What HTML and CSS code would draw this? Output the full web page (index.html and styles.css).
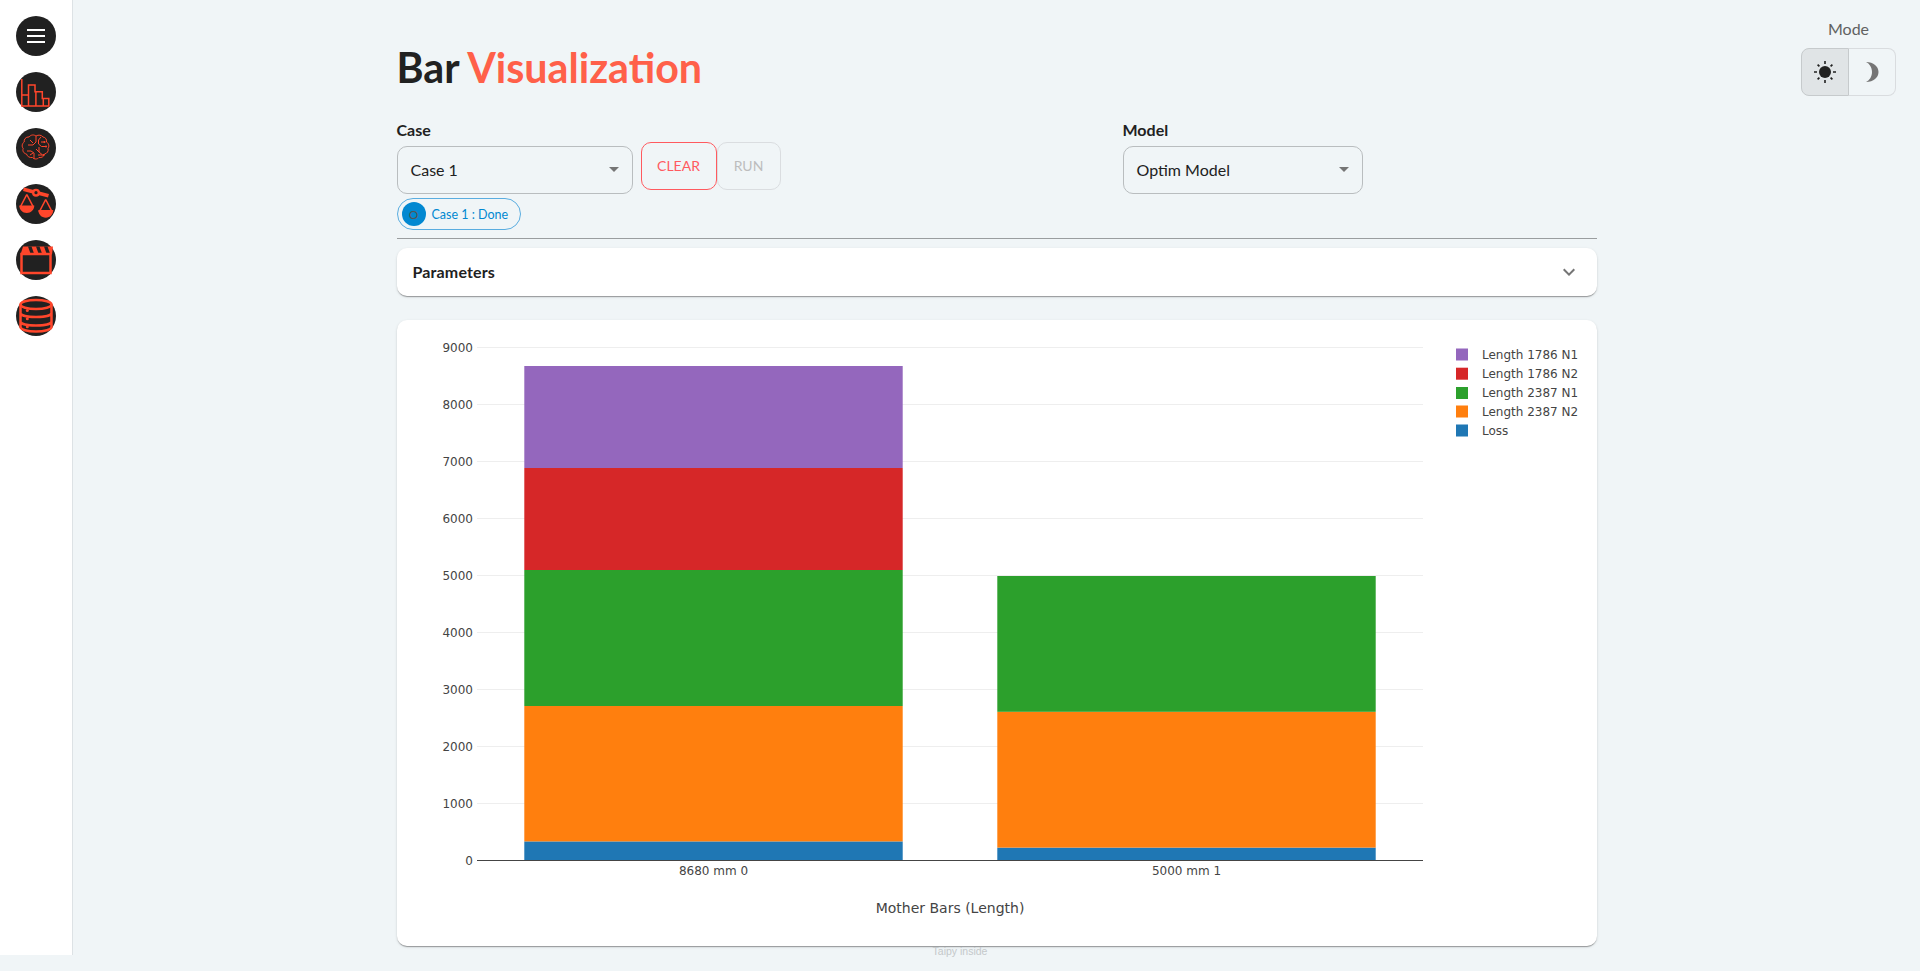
FILE: index.html
```html
<!DOCTYPE html>
<html lang="en">
<head>
    <meta charset="UTF-8">
    <title>Bar Visualization</title>
    <link rel="stylesheet" href="styles.css">
</head>
<body>
    <div class="shell">
        <nav class="sidebar">
            <button class="nav-btn">
                <svg viewBox="0 0 40 40"><circle cx="20" cy="20" r="20" fill="#212121"/><path d="M11 13h18v2H11zM11 19h18v2H11zM11 25h18v2H11z" fill="#fff"/></svg>
            </button>
            <button class="nav-btn">
                <svg viewBox="0 0 40 40"><circle cx="20" cy="20" r="20" fill="#212121"/><path d="M5.800 7v27h27V26.500h-6.500V19.800h-7.300V13H12.500v10H5.800M12.500 23v11M19.900 19.800V34M27.300 26.500V34" fill="none" stroke="#ff462b" stroke-width="1.500"/></svg>
            </button>
            <button class="nav-btn">
                <svg viewBox="0 0 40 40"><circle cx="20" cy="20" r="20" fill="#212121"/><path d="M13 9c2-2.500 5-2.500 7-1 2.500-1.500 5.500-1 7 1 2.500.3 4 2.500 3.500 5 2.500 1.500 3 4.500 1.500 6.500.8 2.500-.8 5-3.500 5.500-.5 2.500-3 4-5.500 3.500-1.500 2-5 2-6.500 0-2.500.5-5.500-1-6-3.500-2.800-.5-4.300-3-3.300-5.500-1.700-2-1.200-5 1-6.500-.4-2.500 1.300-4.700 3.800-5zM20 8v6l-3 3h-5M14 12l3 3M25 9l-2.500 3v4l3 2.500h4M25 14h3M11 23h4l3 2v6M23 19v5l3 2.500M20 21l3 3M22 27h5M14 27l3-2" fill="none" stroke="#ff462b" stroke-width="1"/><circle cx="28.500" cy="14" r="1" fill="#ff462b"/><circle cx="30" cy="18.500" r="1" fill="#ff462b"/><circle cx="27.500" cy="27" r="1" fill="#ff462b"/></svg>
            </button>
            <button class="nav-btn">
                <svg viewBox="0 0 40 40"><circle cx="20" cy="20" r="20" fill="#212121"/><path d="M8 3.500l25 6.500-1 3.500L7 7z" fill="#ff462b"/><circle cx="20" cy="8.700" r="4" fill="#ff462b"/><circle cx="20" cy="8.700" r="1.600" fill="#212121"/><path d="M10.800 10.500l-6.500 12.500M10.800 10.500l6.500 12.500M29.700 15.500l-6.500 12.500M29.700 15.500l6.500 12.500" fill="none" stroke="#ff462b" stroke-width="1.600"/><path d="M3.300 21.500h15c0 4.300-3.300 7.500-7.500 7.500s-7.500-3.200-7.500-7.500zM22.300 26h15c0 4.300-3.300 7.700-7.500 7.700s-7.500-3.400-7.500-7.700z" fill="#ff462b"/></svg>
            </button>
            <button class="nav-btn">
                <svg viewBox="0 0 40 40"><circle cx="20" cy="20" r="20" fill="#212121"/><path d="M4.500 14.500 7 6.500h30l-1 8z" fill="#ff462b"/><path d="M12 6.500l2.500 7h3.500l-2.500-7zM20 6.500l2.500 7H26l-2.500-7zM28 6.500l2.500 7H34l-2.500-7z" fill="#212121"/><rect x="5.500" y="14" width="29" height="19" fill="none" stroke="#ff462b" stroke-width="2.500"/></svg>
            </button>
            <button class="nav-btn">
                <svg viewBox="0 0 40 40"><circle cx="20" cy="20" r="20" fill="#212121"/><ellipse cx="20" cy="8.500" rx="15.500" ry="4.500" fill="none" stroke="#ff462b" stroke-width="2.500"/><path d="M4.500 8.500v22.500c0 2.500 6.900 4.500 15.500 4.500s15.500-2 15.500-4.500V8.500M4.500 17c0 2.500 6.900 4 15.500 4s15.500-1.500 15.500-4M4.500 25.500c0 2.500 6.900 4 15.500 4s15.500-1.500 15.500-4" fill="none" stroke="#ff462b" stroke-width="2.500"/><circle cx="11.300" cy="14.500" r="1.500" fill="#ff462b"/><circle cx="11.300" cy="22.800" r="1.500" fill="#ff462b"/><circle cx="11.300" cy="30.800" r="1.500" fill="#ff462b"/></svg>
            </button>
        </nav>

        <main class="content">
            <h1 class="page-title">Bar <span class="accent">Visualization</span></h1>

            <div class="controls">
                <div class="case-col">
                    <div class="field field-case">
                        <label>Case</label>
                        <div class="select">Case 1<span class="caret"></span></div>
                    </div>
                    <button class="btn btn-clear">CLEAR</button>
                    <button class="btn btn-run">RUN</button>
                </div>
                <div class="field field-model">
                    <label>Model</label>
                    <div class="select">Optim Model<span class="caret"></span></div>
                </div>
            </div>

            <div class="chip"><span class="chip-avatar">O</span>Case 1 : Done</div>

            <hr class="divider">

            <div class="accordion">
                <span>Parameters</span>
                <svg class="chevron" viewBox="0 0 24 24"><path d="M7.410 8.590 12 13.170l4.590-4.580L18 10l-6 6-6-6z"/></svg>
            </div>

            <section class="chart-card">
                <svg class="chart" viewBox="0 0 1200 626">
                    <g class="grid">
                        <path d="M80 483.500H1026M80 426.500H1026M80 369.500H1026M80 312.500H1026M80 255.500H1026M80 198.500H1026M80 141.500H1026M80 84.500H1026M80 27.500H1026"/>
                    </g>
                    <g class="ticks">
                        <text x="76" y="544.500">0</text>
                        <text x="76" y="487.500">1000</text>
                        <text x="76" y="430.500">2000</text>
                        <text x="76" y="373.500">3000</text>
                        <text x="76" y="316.500">4000</text>
                        <text x="76" y="259.500">5000</text>
                        <text x="76" y="202.500">6000</text>
                        <text x="76" y="145.500">7000</text>
                        <text x="76" y="88.500">8000</text>
                        <text x="76" y="31.500">9000</text>
                    </g>
                    <g>
                        <rect x="127.300" y="521.400" width="378.400" height="19.600" fill="#1f77b4"/>
                        <rect x="127.300" y="386" width="378.400" height="135.400" fill="#ff7f0e"/>
                        <rect x="127.300" y="250" width="378.400" height="136" fill="#2ca02c"/>
                        <rect x="127.300" y="148" width="378.400" height="102" fill="#d62728"/>
                        <rect x="127.300" y="46" width="378.400" height="102" fill="#9467bd"/>
                        <rect x="600.300" y="527.600" width="378.400" height="13.400" fill="#1f77b4"/>
                        <rect x="600.300" y="391.800" width="378.400" height="135.800" fill="#ff7f0e"/>
                        <rect x="600.300" y="256" width="378.400" height="135.800" fill="#2ca02c"/>
                    </g>
                    <path class="axis" d="M80 540.500H1026"/>
                    <g class="x-labels">
                        <text x="316.500" y="555">8680 mm 0</text>
                        <text x="789.500" y="555">5000 mm 1</text>
                    </g>
                    <text class="x-title" x="553" y="593">Mother Bars (Length)</text>
                    <g class="legend">
                        <rect x="1059" y="28.500" width="12" height="12" fill="#9467bd"/>
                        <text x="1085" y="39">Length 1786 N1</text>
                        <rect x="1059" y="47.700" width="12" height="12" fill="#d62728"/>
                        <text x="1085" y="58">Length 1786 N2</text>
                        <rect x="1059" y="67" width="12" height="12" fill="#2ca02c"/>
                        <text x="1085" y="77">Length 2387 N1</text>
                        <rect x="1059" y="85.500" width="12" height="12" fill="#ff7f0e"/>
                        <text x="1085" y="95.500">Length 2387 N2</text>
                        <rect x="1059" y="104.500" width="12" height="12" fill="#1f77b4"/>
                        <text x="1085" y="114.500">Loss</text>
                    </g>
                </svg>
            </section>
        </main>
    </div>

    <div class="mode-switch">
        <span class="mode-label">Mode</span>
        <div class="mode-toggle">
            <button class="mode-btn mode-active">
                <svg viewBox="0 0 24 24"><circle cx="12" cy="12" r="6"/><path d="M11.200 1h1.600v3h-1.600zM11.200 20h1.600v3h-1.600zM1 11.200h3v1.600H1zM20 11.200h3v1.600h-3zM4 5.200 5.200 4l1.800 1.800L5.800 7zM17 18.200l1.200-1.200 1.800 1.800-1.200 1.200zM4 18.800 5.800 17 7 18.200 5.200 20zM17 5.800 18.800 4 20 5.200 18.200 7z"/></svg>
            </button>
            <button class="mode-btn">
                <svg viewBox="0 0 24 24"><path d="M6 2c7.500 0 12.500 4.500 12.500 10S13.500 22 6 22c3.500-1.500 6-5.500 6-10S9.500 3.500 6 2z" fill="#757575"/></svg>
            </button>
        </div>
    </div>

    <div class="taipy-tag">Taipy inside</div>
</body>
</html>
```

FILE: styles.css
```css
body {
    margin: 0;
    padding: 0;
    height: 971px;
    overflow: hidden;
    position: relative;
    font-family: 'Lato', sans-serif;
    color: #212121;
    background-color: #f0f5f7;
}

.shell {
    display: flex;
    align-items: flex-start;
}

/* left navigation */
.sidebar {
    flex: 0 0 72px;
    display: flex;
    flex-direction: column;
    align-items: center;
    gap: 16px;
    padding-top: 16px;
    height: 939px;
    background-color: #fff;
    border-right: 1px solid #dde2e5;
}

.nav-btn {
    width: 40px;
    height: 40px;
    padding: 0;
    border: none;
    background: none;
}

.nav-btn svg {
    display: block;
    width: 40px;
    height: 40px;
}

.content {
    flex: 1;
    max-width: 1200px;
    margin: 0 auto;
    padding-top: 39px;
}

.page-title {
    margin: 0;
    font-size: 41.2px;
    line-height: 56px;
    font-weight: 700;
}

.accent {
    color: #ff6049;
}

.controls {
    display: flex;
    margin-top: 25px;
}

.case-col {
    display: flex;
    flex: 0 0 726px;
}

.field label {
    display: block;
    height: 20px;
    margin-bottom: 6px;
    font-size: 16px;
    line-height: 20px;
    font-weight: 700;
}

.field-case {
    width: 236px;
    margin-right: 8px;
}

.field-model {
    width: 240px;
}

.select {
    display: flex;
    align-items: center;
    justify-content: space-between;
    box-sizing: border-box;
    height: 48px;
    padding: 0 9px 2px 13px;
    font-size: 16px;
    border: 1px solid #b9bdbf;
    border-radius: 10px;
}

.caret {
    width: 0;
    height: 0;
    margin-right: 4px;
    border-left: 5px solid transparent;
    border-right: 5px solid transparent;
    border-top: 5px solid #757575;
}

.btn {
    height: 48px;
    margin-top: 22px;
    padding-bottom: 3px;
    box-sizing: border-box;
    font-family: 'Lato', sans-serif;
    font-size: 14px;
    background: none;
    border-radius: 10px;
}

.btn-clear {
    width: 76px;
    color: #ff5a5f;
    border: 1px solid #ff5a5f;
}

.btn-run {
    width: 64px;
    color: #bdbdbd;
    border: 1px solid #dadde0;
}

.chip {
    display: inline-flex;
    align-items: center;
    box-sizing: border-box;
    height: 32px;
    margin-top: 4px;
    padding: 0 12px 0 4px;
    font-size: 12.5px;
    color: #0288d1;
    border: 1px solid #5aade0;
    border-radius: 16px;
}

.chip-avatar {
    display: flex;
    align-items: center;
    justify-content: center;
    width: 24px;
    height: 24px;
    margin-right: 6px;
    font-size: 12px;
    color: #555;
    background-color: #0288d1;
    border-radius: 50%;
}

.divider {
    height: 1px;
    margin: 8px 0 9px;
    border: none;
    background-color: #9a9d9f;
}

.accordion {
    display: flex;
    align-items: center;
    justify-content: space-between;
    box-sizing: border-box;
    height: 48px;
    padding: 0 16px 1px;
    font-size: 16px;
    font-weight: 700;
    letter-spacing: 0.15px;
    background-color: #fff;
    border-radius: 10px;
    box-shadow: 0 2px 1px -1px rgba(0,0,0,0.2), 0 1px 1px 0 rgba(0,0,0,0.14), 0 1px 3px 0 rgba(0,0,0,0.12);
}

.chevron {
    width: 24px;
    height: 24px;
    fill: #757575;
}

.chart-card {
    height: 626px;
    margin-top: 24px;
    background-color: #fff;
    border-radius: 10px;
    box-shadow: 0 2px 1px -1px rgba(0,0,0,0.2), 0 1px 1px 0 rgba(0,0,0,0.14), 0 1px 3px 0 rgba(0,0,0,0.12);
}

.chart {
    display: block;
    width: 1200px;
    height: 626px;
    font-family: 'DejaVu Sans', sans-serif;
    font-size: 12px;
    fill: #444;
}

.grid path {
    fill: none;
    stroke: #eee;
    stroke-width: 1;
}

.axis {
    fill: none;
    stroke: #444;
    stroke-width: 1;
}

.ticks text {
    text-anchor: end;
}

.x-labels text {
    text-anchor: middle;
}

.x-title {
    font-size: 14px;
    text-anchor: middle;
}

/* theme switch, top right */
.mode-switch {
    position: absolute;
    top: 19px;
    left: 1801px;
    width: 95px;
    text-align: center;
}

.mode-label {
    display: block;
    height: 20px;
    margin-bottom: 9px;
    font-size: 16px;
    line-height: 20px;
    color: #616161;
}

.mode-toggle {
    display: flex;
    height: 48px;
}

.mode-btn {
    flex: 1;
    padding: 0;
    display: flex;
    align-items: center;
    justify-content: center;
    background: none;
    border: 1px solid #d9dcdf;
}

.mode-btn:first-child {
    border-radius: 8px 0 0 8px;
}

.mode-btn:last-child {
    border-left: none;
    border-radius: 0 8px 8px 0;
}

.mode-active {
    background-color: #e0e4e6;
    border-color: #c6cacc;
}

.mode-btn svg {
    width: 24px;
    height: 24px;
    fill: #212121;
}

.taipy-tag {
    position: absolute;
    top: 945px;
    left: 0;
    right: 0;
    text-align: center;
    font-family: 'Liberation Sans', sans-serif;
    font-size: 10.5px;
    color: #c4c8ca;
}
```
